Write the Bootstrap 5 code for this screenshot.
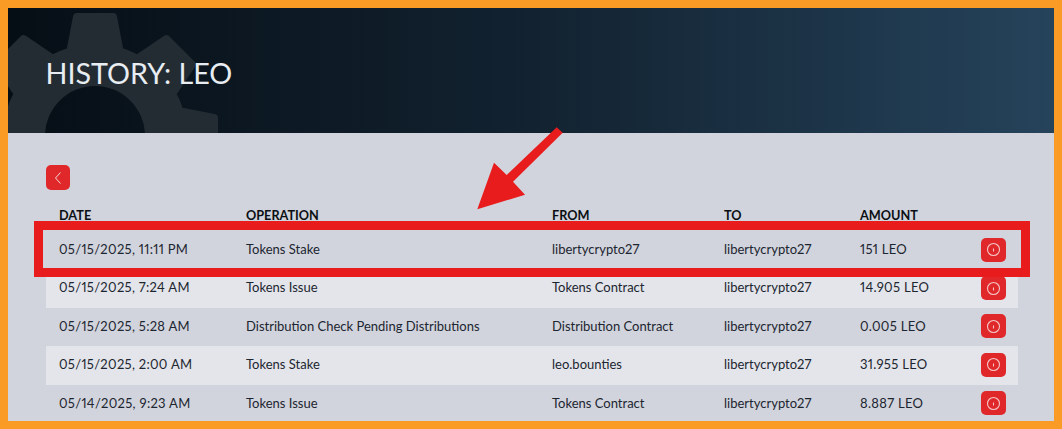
<!DOCTYPE html>
<html lang="en">
<head>
<meta charset="utf-8">
<title>History: LEO</title>
<link rel="stylesheet" href="https://cdn.jsdelivr.net/npm/bootstrap@5.3.0/dist/css/bootstrap.min.css">
<style>
html,body{height:100%;}
body{background:#f99b25;padding:8px;overflow:hidden;font-family:"Lato","Noto Sans",sans-serif;color:#1c2530;}
.frame{position:relative;height:413px;overflow:hidden;background:#d1d4dc;}
.hero{position:relative;height:125px;overflow:hidden;padding-left:37.5px;background:linear-gradient(90deg,#060e15 0%,#122230 50%,#25435b 100%);}
.hero-gear{position:absolute;left:0;top:0;}
.hero-title{position:relative;margin:0;padding-top:47px;font-size:28.7px;line-height:36px;font-weight:400;color:#e8edf2;font-family:"Lato",sans-serif;}
.page-body{padding:32px 36px 0 38px;}
.red-btn{display:flex;align-items:center;justify-content:center;padding:0;border:0;border-radius:5px;background:#e0282a;}
.back-btn{width:24px;height:25px;}
.info-btn{width:25px;height:24px;margin-left:auto;margin-right:12px;}
.hist-table{table-layout:fixed;width:972px;margin:15px 0 0;font-size:13px;font-variant-numeric:proportional-nums;--bs-table-bg:transparent;--bs-table-color:#1c2530;}
.hist-table th,.hist-table td{padding:0 0 0 13px;vertical-align:middle;white-space:nowrap;}
.hist-table th{height:26px;font-size:12.7px;font-weight:700;color:#0b0f14;text-transform:uppercase;padding-bottom:5px;}
.hist-table td{height:38.4px;padding-bottom:1px;}
.hist-table td.num-cell{letter-spacing:.3px;}
.hist-table tbody tr:nth-child(even) td{background:#e3e5ea;}
.c-date{width:187px}.c-op{width:306px}.c-from{width:172px}.c-to{width:136px}.c-amt{width:121px}.c-act{width:50px}
.mark-box{position:absolute;left:26px;top:213px;width:996px;height:56px;border:9px solid #e81c1c;pointer-events:none;}
.mark-arrow{position:absolute;left:0;top:0;pointer-events:none;}
</style>
</head>
<body>
<div class="frame">
  <header class="hero">
    <svg class="hero-gear" width="240" height="125" viewBox="8 8 240 125" aria-hidden="true">
      <g fill="#232c33" stroke="#232c33" stroke-width="8" stroke-linejoin="round">
        <g transform="translate(95 136)">
          <polygon points="-24,-88 -18,-119 18,-119 24,-88"/>
          <polygon points="-24,-88 -18,-119 18,-119 24,-88" transform="rotate(45)"/>
          <polygon points="-24,-88 -18,-119 18,-119 24,-88" transform="rotate(90)"/>
          <polygon points="-24,-88 -18,-119 18,-119 24,-88" transform="rotate(-45)"/>
          <polygon points="-24,-88 -18,-119 18,-119 24,-88" transform="rotate(-90)"/>
        </g>
      </g>
      <path fill="#232c33" fill-rule="evenodd" d="M3 136a92 92 0 1 0 184 0a92 92 0 1 0-184 0zM45 136a50 50 0 1 0 100 0a50 50 0 1 0-100 0z"/>
    </svg>
    <h1 class="hero-title">HISTORY: LEO</h1>
  </header>
  <main class="page-body">
    <button type="button" class="red-btn back-btn" aria-label="Back">
      <svg width="10" height="14" viewBox="0 0 10 14" fill="none" stroke="#f6d9d9" stroke-width="1"><path d="M7.5 1.5L2.5 7L7.5 12.5"/></svg>
    </button>
    <table class="table table-borderless hist-table">
      <colgroup><col class="c-date"><col class="c-op"><col class="c-from"><col class="c-to"><col class="c-amt"><col class="c-act"></colgroup>
      <thead><tr><th>Date</th><th>Operation</th><th>From</th><th>To</th><th>Amount</th><th></th></tr></thead>
      <tbody>
        <tr><td class="num-cell">05/15/2025, 11:11 PM</td><td>Tokens Stake</td><td>libertycrypto27</td><td>libertycrypto27</td><td class="num-cell">151 LEO</td><td><button type="button" class="red-btn info-btn" aria-label="Details"><svg width="15" height="15" viewBox="0 0 15 15" fill="none" stroke="#f5c4c4" stroke-width="1.1"><circle cx="7.5" cy="7.5" r="6"/><path d="M7.5 6.5v3"/></svg></button></td></tr>
        <tr><td class="num-cell">05/15/2025, 7:24 AM</td><td>Tokens Issue</td><td>Tokens Contract</td><td>libertycrypto27</td><td class="num-cell">14.905 LEO</td><td><button type="button" class="red-btn info-btn" aria-label="Details"><svg width="15" height="15" viewBox="0 0 15 15" fill="none" stroke="#f5c4c4" stroke-width="1.1"><circle cx="7.5" cy="7.5" r="6"/><path d="M7.5 6.5v3"/></svg></button></td></tr>
        <tr><td class="num-cell">05/15/2025, 5:28 AM</td><td>Distribution Check Pending Distributions</td><td>Distribution Contract</td><td>libertycrypto27</td><td class="num-cell">0.005 LEO</td><td><button type="button" class="red-btn info-btn" aria-label="Details"><svg width="15" height="15" viewBox="0 0 15 15" fill="none" stroke="#f5c4c4" stroke-width="1.1"><circle cx="7.5" cy="7.5" r="6"/><path d="M7.5 6.5v3"/></svg></button></td></tr>
        <tr><td class="num-cell">05/15/2025, 2:00 AM</td><td>Tokens Stake</td><td>leo.bounties</td><td>libertycrypto27</td><td class="num-cell">31.955 LEO</td><td><button type="button" class="red-btn info-btn" aria-label="Details"><svg width="15" height="15" viewBox="0 0 15 15" fill="none" stroke="#f5c4c4" stroke-width="1.1"><circle cx="7.5" cy="7.5" r="6"/><path d="M7.5 6.5v3"/></svg></button></td></tr>
        <tr><td class="num-cell">05/14/2025, 9:23 AM</td><td>Tokens Issue</td><td>Tokens Contract</td><td>libertycrypto27</td><td class="num-cell">8.887 LEO</td><td><button type="button" class="red-btn info-btn" aria-label="Details"><svg width="15" height="15" viewBox="0 0 15 15" fill="none" stroke="#f5c4c4" stroke-width="1.1"><circle cx="7.5" cy="7.5" r="6"/><path d="M7.5 6.5v3"/></svg></button></td></tr>
      </tbody>
    </table>
  </main>
  <div class="mark-box"></div>
  <svg class="mark-arrow" width="1046" height="413" viewBox="8 8 1046 413" aria-hidden="true"><polygon fill="#e81c1c" points="556.7,127.3 562.7,132.7 513,181.7 525,194.7 477.3,209.3 494,162.7 506.7,175"/></svg>
</div>
</body>
</html>
